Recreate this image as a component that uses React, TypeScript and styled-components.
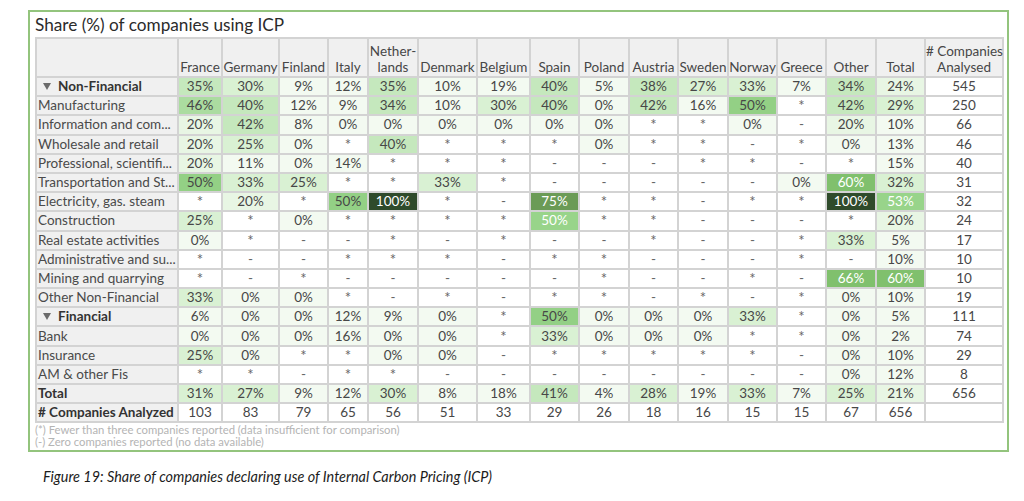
import styled, { createGlobalStyle } from "styled-components";

const GlobalStyle = createGlobalStyle`
  html, body {
    margin: 0;
    padding: 0;
    background: #ffffff;
  }
  body {
    font-family: Lato, "Open Sans", sans-serif;
  }
`;

const Page = styled.div`
  width: 1024px;
  height: 501px;
  box-sizing: border-box;
  padding: 10px 0 0 28px;
  overflow: hidden;
`;

const Frame = styled.section`
  width: 981px;
  height: 442px;
  box-sizing: border-box;
  border: 2px solid #93c47d;
  padding: 0 0 0 5px;
  display: flex;
  flex-direction: column;
`;

const Title = styled.h2`
  margin: 0;
  height: 25px;
  font: 400 17.2px/25px Lato, sans-serif;
  color: #2b2b2b;
  white-space: nowrap;
`;

const Grid = styled.table`
  width: 968px;
  table-layout: fixed;
  border-collapse: collapse;
  font: 400 13.5px/17px Lato, sans-serif;
  color: #474747;
`;

const HeadRow = styled.tr`
  height: 39px;
`;

const Row = styled.tr`
  height: 19.2px;
`;

const HeadCell = styled.th`
  background: #f0f0f0;
  border: 2px solid #d3d3d3;
  padding: 0 0 1px;
  font-weight: 400;
  text-align: center;
  vertical-align: bottom;
  line-height: 16px;
  white-space: nowrap;
`;

const RowLabel = styled.th<{ $bold?: boolean }>`
  background: #f0f0f0;
  border: 2px solid #d3d3d3;
  padding: 0 0 0 1px;
  text-align: left;
  font-weight: ${(p) => (p.$bold ? 700 : 400)};
  color: ${(p) => (p.$bold ? "#333333" : "#4a4a4a")};
  white-space: nowrap;
  overflow: hidden;
`;

const Cell = styled.td<{ $bg: string; $fg: string; $mark?: boolean }>`
  background: ${(p) => p.$bg};
  color: ${(p) => p.$fg};
  border: 2px solid #d3d3d3;
  padding: 0;
  text-align: center;
  white-space: nowrap;
  font-size: ${(p) => (p.$mark ? "15px" : "13.5px")};
`;

const Caret = styled.svg`
  width: 8px;
  height: 7px;
  margin: 0 7px 0 5px;
  vertical-align: 1px;
`;

const Notes = styled.div`
  margin-top: 1px;
  font: 400 11.3px/12px Lato, sans-serif;
  color: #b4b4b4;
  white-space: nowrap;
`;

const Caption = styled.p`
  margin: 16px 0 0 15px;
  font: italic 400 14.4px/18px Lato, sans-serif;
  color: #1c1c1c;
  white-space: nowrap;
`;

const columns: { name: string; width: number }[] = [
  { name: "France", width: 44 },
  { name: "Germany", width: 57 },
  { name: "Finland", width: 49 },
  { name: "Italy", width: 40 },
  { name: "Nether-\nlands", width: 50 },
  { name: "Denmark", width: 59 },
  { name: "Belgium", width: 53 },
  { name: "Spain", width: 49 },
  { name: "Poland", width: 50 },
  { name: "Austria", width: 49 },
  { name: "Sweden", width: 50 },
  { name: "Norway", width: 49 },
  { name: "Greece", width: 49 },
  { name: "Other", width: 50 },
  { name: "Total", width: 49 },
  { name: "# Companies\nAnalysed", width: 78 },
];

type RowData = { label: string; group?: boolean; bold?: boolean; plain?: boolean; cells: string[] };

const rows: RowData[] = [
  { label: "Non-Financial", group: true, cells: ["35%", "30%", "9%", "12%", "35%", "10%", "19%", "40%", "5%", "38%", "27%", "33%", "7%", "34%", "24%", "545"] },
  { label: "Manufacturing", cells: ["46%", "40%", "12%", "9%", "34%", "10%", "30%", "40%", "0%", "42%", "16%", "50%", "*", "42%", "29%", "250"] },
  { label: "Information and com...", cells: ["20%", "42%", "8%", "0%", "0%", "0%", "0%", "0%", "0%", "*", "*", "0%", "-", "20%", "10%", "66"] },
  { label: "Wholesale and retail", cells: ["20%", "25%", "0%", "*", "40%", "*", "*", "*", "0%", "*", "*", "-", "*", "0%", "13%", "46"] },
  { label: "Professional, scientifi...", cells: ["20%", "11%", "0%", "14%", "*", "*", "*", "-", "-", "-", "*", "*", "-", "*", "15%", "40"] },
  { label: "Transportation and St...", cells: ["50%", "33%", "25%", "*", "*", "33%", "*", "-", "-", "-", "-", "-", "0%", "60%", "32%", "31"] },
  { label: "Electricity, gas. steam", cells: ["*", "20%", "*", "50%", "100%", "*", "-", "75%", "*", "*", "-", "*", "*", "100%", "53%", "32"] },
  { label: "Construction", cells: ["25%", "*", "0%", "*", "*", "*", "*", "50%!", "*", "*", "-", "-", "-", "*", "20%", "24"] },
  { label: "Real estate activities", cells: ["0%", "*", "-", "-", "*", "-", "*", "-", "-", "*", "-", "-", "*", "33%", "5%", "17"] },
  { label: "Administrative and su...", cells: ["*", "-", "-", "*", "*", "*", "-", "*", "*", "-", "-", "-", "*", "-", "10%", "10"] },
  { label: "Mining and quarrying", cells: ["*", "-", "*", "-", "-", "-", "-", "-", "*", "-", "-", "*", "-", "66%", "60%", "10"] },
  { label: "Other Non-Financial", cells: ["33%", "0%", "0%", "*", "-", "*", "-", "*", "*", "-", "*", "-", "*", "0%", "10%", "19"] },
  { label: "Financial", group: true, cells: ["6%", "0%", "0%", "12%", "9%", "0%", "*", "50%", "0%", "0%", "0%", "33%", "*", "0%", "5%", "111"] },
  { label: "Bank", cells: ["0%", "0%", "0%", "16%", "0%", "0%", "*", "33%", "0%", "0%", "0%", "*", "*", "0%", "2%", "74"] },
  { label: "Insurance", cells: ["25%", "0%", "*", "*", "0%", "0%", "-", "*", "*", "*", "*", "*", "-", "0%", "10%", "29"] },
  { label: "AM & other Fis", cells: ["*", "*", "-", "*", "*", "-", "-", "-", "-", "-", "-", "-", "-", "0%", "12%", "8"] },
  { label: "Total", bold: true, cells: ["31%", "27%", "9%", "12%", "30%", "8%", "18%", "41%", "4%", "28%", "19%", "33%", "7%", "25%", "21%", "656"] },
  { label: "# Companies Analyzed", bold: true, plain: true, cells: ["103", "83", "79", "65", "56", "51", "33", "29", "26", "18", "16", "15", "15", "67", "656", ""] },
];

// heat-map shade for a percentage; "!" marks a cell drawn with light text
const shade = (raw: string, plain?: boolean): { bg: string; fg: string; text: string } => {
  const text = raw.replace("!", "");
  const dark = "#474747";
  if (text === "*" || text === "-") return { bg: "#ffffff", fg: "#666666", text };
  if (plain || !text.endsWith("%")) return { bg: "#ffffff", fg: dark, text };
  const n = parseInt(text, 10);
  const light = raw.endsWith("!");
  if (n >= 100) return { bg: "#2f4b2b", fg: "#ffffff", text };
  if (n >= 70) return { bg: "#6b9b56", fg: "#ffffff", text };
  if (n >= 55) return { bg: "#80c06d", fg: "#ffffff", text };
  if (n > 50) return { bg: "#98d48a", fg: "#ffffff", text };
  if (n >= 50) return { bg: light ? "#98d48a" : "#93d085", fg: light ? "#ffffff" : dark, text };
  if (n >= 45) return { bg: "#abdca0", fg: dark, text };
  if (n >= 34) return { bg: "#c5e8bd", fg: dark, text };
  if (n >= 25) return { bg: "#d9f1d3", fg: dark, text };
  if (n >= 20) return { bg: "#e8f6e4", fg: dark, text };
  return { bg: "#f3faf1", fg: dark, text };
};

export default function App() {
  return (
    <Page>
      <GlobalStyle />
      <Frame>
        <Title>Share (%) of companies using ICP</Title>
        <Grid>
          <colgroup>
            <col style={{ width: 142 }} />
            {columns.map((c) => (
              <col key={c.name} style={{ width: c.width }} />
            ))}
          </colgroup>
          <thead>
            <HeadRow>
              <HeadCell />
              {columns.map((c) => (
                <HeadCell key={c.name}>
                  {c.name.split("\n").map((line, i) => (
                    <div key={i}>{line}</div>
                  ))}
                </HeadCell>
              ))}
            </HeadRow>
          </thead>
          <tbody>
            {rows.map((r) => (
              <Row key={r.label}>
                <RowLabel $bold={r.group || r.bold}>
                  {r.group && (
                    <Caret viewBox="0 0 8 7">
                      <polygon points="0,0 8,0 4,7" fill="#6b6b6b" />
                    </Caret>
                  )}
                  {r.label}
                </RowLabel>
                {r.cells.map((v, i) => {
                  const s = shade(v, r.plain || i === 15);
                  return (
                    <Cell key={i} $bg={s.bg} $fg={s.fg} $mark={s.text === "*"}>
                      {s.text}
                    </Cell>
                  );
                })}
              </Row>
            ))}
          </tbody>
        </Grid>
        <Notes>
          <div>(*) Fewer than three companies reported (data insufficient for comparison)</div>
          <div>(-) Zero companies reported (no data available)</div>
        </Notes>
      </Frame>
      <Caption>Figure 19: Share of companies declaring use of Internal Carbon Pricing (ICP)</Caption>
    </Page>
  );
}
